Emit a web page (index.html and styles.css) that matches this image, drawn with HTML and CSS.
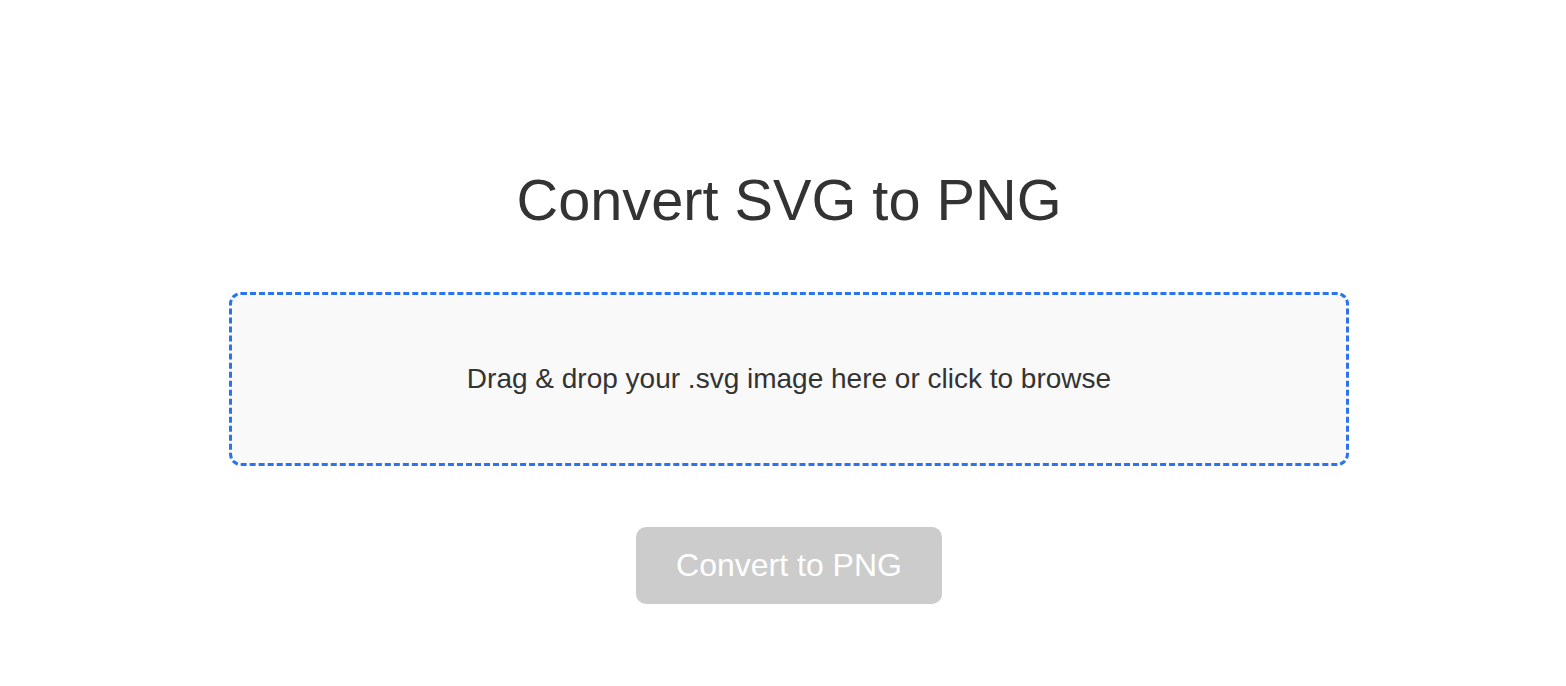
FILE: index.html
```html
<!DOCTYPE html>
<html lang="en">
<head>
<meta charset="utf-8">
<title>Convert SVG to PNG</title>
<link rel="stylesheet" href="styles.css">
</head>
<body>
<main class="page">
  <h1 class="title">Convert SVG to PNG</h1>
  <div class="dropzone">
    <p class="dropzone-text">Drag &amp; drop your .svg image here or click to browse</p>
  </div>
  <button class="convert-btn" type="button" disabled>Convert to PNG</button>
</main>
</body>
</html>
```

FILE: styles.css
```css
html, body {
  margin: 0;
  padding: 0;
  background: #ffffff;
}

body {
  font-family: "Liberation Sans", Arial, sans-serif;
  color: #333333;
}

.page {
  display: flex;
  flex-direction: column;
  align-items: center;
  padding: 167px 0 0 12px;
}

.title {
  margin: 0;
  font-size: 57.7px;
  font-weight: normal;
  line-height: 67px;
  color: #333333;
}

.dropzone {
  box-sizing: border-box;
  width: 1120px;
  height: 174px;
  margin-top: 58px;
  border: 3px dashed #2a74f0;
  border-radius: 12px;
  background: #f9f9f9;
  display: flex;
  align-items: center;
  justify-content: center;
}

.dropzone-text {
  margin: 0;
  font-size: 28px;
  color: #333333;
}

.convert-btn {
  margin-top: 61px;
  width: 306px;
  height: 77px;
  border: none;
  border-radius: 10px;
  background: #cccccc;
  color: #ffffff;
  font-family: "Liberation Sans", Arial, sans-serif;
  font-size: 32px;
  cursor: not-allowed;
}
```
